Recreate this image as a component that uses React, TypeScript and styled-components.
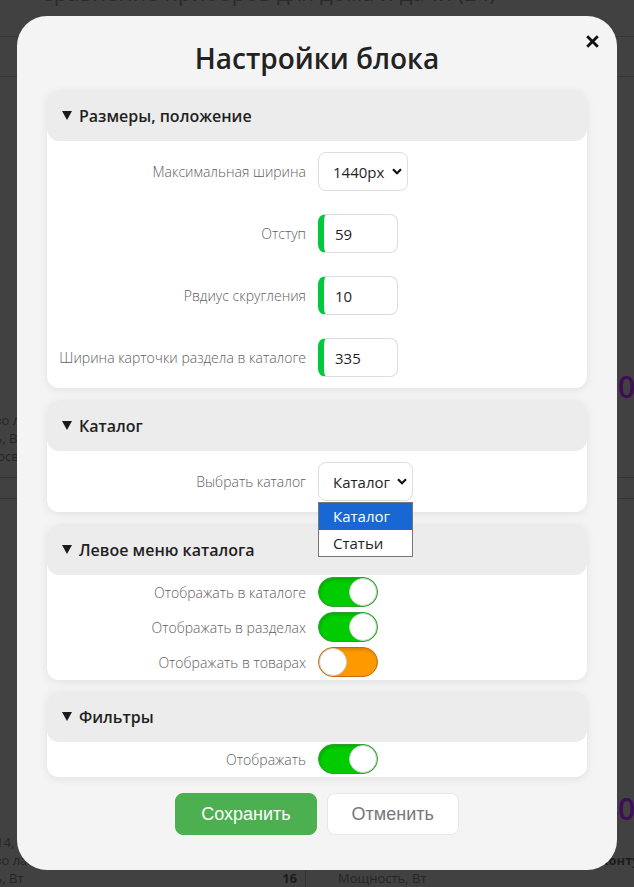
import React from 'react'
import styled, { createGlobalStyle } from 'styled-components'

const GlobalStyle = createGlobalStyle`
  * {
    box-sizing: border-box;
  }
  html,
  body {
    margin: 0;
    padding: 0;
  }
  body {
    font-family: 'Open Sans', 'Noto Sans', sans-serif;
    background: #414141;
  }
`

const Screen = styled.div`
  position: relative;
  width: 634px;
  height: 887px;
  overflow: hidden;
  background: #414141;
`

// dimmed page behind the modal
const BgPage = styled.div`
  color: #262626;
  font-family: 'Open Sans', sans-serif;
`

const BgTopBar = styled.div`
  height: 37px;
  overflow: hidden;
  border-bottom: 1px solid #363636;
  padding-left: 40px;
`

const BgTopText = styled.div`
  margin-top: -19px;
  font-size: 22px;
  line-height: 22px;
  white-space: nowrap;
  color: #2a2a2a;
`

const BgSubBar = styled.div`
  height: 40px;
  border-bottom: 1px solid #363636;
`

const BgGrid = styled.div`
  display: grid;
  grid-template-columns: 370px 380px;
  margin-left: -65px;
`

const BgColumn = styled.div<{ $right?: boolean }>`
  border-left: ${(p) => (p.$right ? '1px solid #333' : 'none')};
  padding: ${(p) => (p.$right ? '0 8px 0 32px' : '0 8px 0 0')};
`

const BgCard = styled.div`
  height: 422px;
  display: flex;
  flex-direction: column;
`

const BgImage = styled.div`
  height: 290px;
`

const BgPrice = styled.div`
  height: 40px;
  line-height: 40px;
  font-size: 30px;
  font-weight: 600;
  color: #3e0d55;
  text-align: right;
`

const BgSpecs = styled.div`
  margin-top: 4px;
  height: 66px;
`

const BgSpec = styled.div`
  display: flex;
  justify-content: space-between;
  height: 18px;
  line-height: 18px;
  font-size: 13px;
`

const BgValue = styled.b`
  color: #1c1c1c;
`

const BgTableRow = styled.div`
  height: 22px;
  border-top: 1px solid #333;
  border-bottom: 1px solid #333;
`

// modal
const ModalLayer = styled.div`
  position: absolute;
  inset: 0;
  display: flex;
  justify-content: center;
  align-items: flex-start;
  padding-top: 16px;
`

const Modal = styled.div`
  position: relative;
  width: 600px;
  height: 854px;
  background: #f4f4f4;
  border-radius: 30px;
  padding: 23px 30px 0;
  display: flex;
  flex-direction: column;
`

const CloseBtn = styled.button`
  position: absolute;
  top: 19px;
  right: 18px;
  width: 13px;
  height: 13px;
  padding: 0;
  border: none;
  background: none;
  cursor: pointer;
  display: flex;
`

const Title = styled.h2`
  margin: 0 0 13px;
  font-size: 28px;
  line-height: 38px;
  font-weight: 600;
  color: #222;
  text-align: center;
`

const Sections = styled.div`
  display: flex;
  flex-direction: column;
`

const Section = styled.section<{ $gap?: number }>`
  background: #fff;
  border-radius: 12px;
  box-shadow: 0 2px 8px rgba(0, 0, 0, 0.08);
  margin-bottom: ${(p) => (p.$gap !== undefined ? p.$gap : 12)}px;
`

const SectionHead = styled.div`
  height: 51px;
  background: #ececec;
  border-radius: 12px;
  display: flex;
  align-items: center;
  gap: 7px;
  padding-left: 15px;
  font-size: 16px;
  font-weight: 600;
  color: #1f1f1f;
`

const Caret = styled.span`
  width: 0;
  height: 0;
  border-left: 5.5px solid transparent;
  border-right: 5.5px solid transparent;
  border-top: 9px solid #1a1a1a;
`

const SectionBody = styled.div<{ $compact?: boolean }>`
  display: flex;
  flex-direction: column;
  gap: ${(p) => (p.$compact ? '5px' : '23px')};
  padding: ${(p) => (p.$compact ? '2px 0 3px' : '11px 0')};
`

const Row = styled.div`
  display: grid;
  grid-template-columns: 259px auto;
  column-gap: 12px;
  align-items: center;
`

const Label = styled.span`
  text-align: right;
  font-size: 14px;
  font-weight: 300;
  color: #606060;
  white-space: nowrap;
`

const Control = styled.div`
  display: flex;
`

const SelectWrap = styled.div`
  position: relative;
`

const SelectBox = styled.div<{ $w: number }>`
  width: ${(p) => p.$w}px;
  height: 39px;
  border: 1px solid #ddd;
  border-radius: 8px;
  background: #fff;
  display: flex;
  align-items: center;
  justify-content: space-between;
  padding: 0 5px 0 14px;
  font-size: 15px;
  color: #1f1f1f;
`

const Options = styled.ul`
  position: absolute;
  top: calc(100% + 1px);
  left: 0;
  right: 0;
  margin: 0;
  padding: 0;
  list-style: none;
  background: #fff;
  border: 1px solid #767676;
  z-index: 2;
`

const Option = styled.li<{ $active?: boolean }>`
  height: 26.5px;
  line-height: 26.5px;
  padding-left: 14px;
  font-size: 15px;
  background: ${(p) => (p.$active ? '#1967d2' : '#fff')};
  color: ${(p) => (p.$active ? '#fff' : '#1f1f1f')};
`

const NumberInput = styled.input`
  width: 80px;
  height: 39px;
  border: 1px solid #ddd;
  border-left: 6px solid #00c93c;
  border-radius: 8px;
  padding: 0 0 0 11px;
  font: 15px 'Open Sans', sans-serif;
  color: #1f1f1f;
  background: #fff;
  outline: none;
`

const Switch = styled.button<{ $on: boolean }>`
  width: 60px;
  height: 30px;
  padding: 0;
  border-radius: 15px;
  background: ${(p) => (p.$on ? '#00cc00' : '#ff9900')};
  border: 1px solid ${(p) => (p.$on ? '#2f9f2f' : '#c8680a')};
  display: flex;
  justify-content: ${(p) => (p.$on ? 'flex-end' : 'flex-start')};
  align-items: center;
  box-shadow: inset 1px 2px 3px rgba(0, 0, 0, 0.15);
  cursor: pointer;
`

const Knob = styled.span`
  width: 28px;
  height: 28px;
  border-radius: 50%;
  background: #fff;
  border: 1px solid #d0d0d0;
`

const Actions = styled.div`
  display: flex;
  justify-content: center;
  gap: 10px;
  margin-top: 16px;
`

const Btn = styled.button<{ $primary?: boolean }>`
  height: 42px;
  padding: ${(p) => (p.$primary ? '0 25px' : '0 24px')};
  border-radius: 8px;
  font: 18px 'Liberation Sans', Arial, sans-serif;
  border: 1px solid ${(p) => (p.$primary ? '#4caf50' : '#e8e8e8')};
  background: ${(p) => (p.$primary ? '#4caf50' : '#fff')};
  color: ${(p) => (p.$primary ? '#fff' : '#777')};
  cursor: pointer;
`

const Chevron = () => (
  <svg width="10" height="7" viewBox="0 0 10 7">
    <path d="M1 1.3 L5 5.3 L9 1.3" fill="none" stroke="#111" strokeWidth="2.2" />
  </svg>
)

const cards = [
  {
    price: '12 900 ₽',
    specs: [
      ['Количество ламп, шт', '8'],
      ['Мощность, Вт', '60'],
      ['Площадь освещения, м²', '16']
    ]
  },
  {
    price: '15 400 ₽',
    specs: [
      ['Цоколь: Е14, LED,', 'E14'],
      ['Количество ламп, шт', 'Контурный'],
      ['Мощность, Вт', '16']
    ]
  }
]

const BgProducts = ({ right }: { right?: boolean }) => (
  <BgColumn $right={right}>
    {cards.map((c, i) => (
      <BgCard key={i}>
        <BgImage />
        <BgPrice>{c.price}</BgPrice>
        <BgSpecs>
          {c.specs.map(([k, v]) => (
            <BgSpec key={k}>
              <span>{k}</span>
              <BgValue>{v}</BgValue>
            </BgSpec>
          ))}
        </BgSpecs>
        <BgTableRow />
      </BgCard>
    ))}
  </BgColumn>
)

const Field = ({ label, children }: { label: string; children: React.ReactNode }) => (
  <Row>
    <Label>{label}</Label>
    <Control>{children}</Control>
  </Row>
)

const Toggle = ({ on }: { on: boolean }) => (
  <Switch type="button" role="switch" aria-checked={on} $on={on}>
    <Knob />
  </Switch>
)

const App = () => {
  return (
    <Screen>
      <GlobalStyle />
      <BgPage>
        <BgTopBar>
          <BgTopText>Сравнение приборов для дома и дачи (24)</BgTopText>
        </BgTopBar>
        <BgSubBar />
        <BgGrid>
          <BgProducts />
          <BgProducts right />
        </BgGrid>
      </BgPage>

      <ModalLayer>
        <Modal>
          <CloseBtn aria-label="Закрыть">
            <svg width="13" height="13" viewBox="0 0 13 13">
              <path d="M1.2 1.2 L11.8 11.8 M11.8 1.2 L1.2 11.8" stroke="#111" strokeWidth="2.8" />
            </svg>
          </CloseBtn>
          <Title>Настройки блока</Title>

          <Sections>
            <Section>
              <SectionHead>
                <Caret />
                Размеры, положение
              </SectionHead>
              <SectionBody>
                <Field label="Максимальная ширина">
                  <SelectBox $w={90}>
                    1440px
                    <Chevron />
                  </SelectBox>
                </Field>
                <Field label="Отступ">
                  <NumberInput defaultValue="59" />
                </Field>
                <Field label="Рвдиус скругления">
                  <NumberInput defaultValue="10" />
                </Field>
                <Field label="Ширина карточки раздела в каталоге">
                  <NumberInput defaultValue="335" />
                </Field>
              </SectionBody>
            </Section>

            <Section>
              <SectionHead>
                <Caret />
                Каталог
              </SectionHead>
              <SectionBody>
                <Field label="Выбрать каталог">
                  <SelectWrap>
                    <SelectBox $w={95}>
                      Каталог
                      <Chevron />
                    </SelectBox>
                    <Options>
                      <Option $active>Каталог</Option>
                      <Option>Статьи</Option>
                    </Options>
                  </SelectWrap>
                </Field>
              </SectionBody>
            </Section>

            <Section $gap={11}>
              <SectionHead>
                <Caret />
                Левое меню каталога
              </SectionHead>
              <SectionBody $compact>
                <Field label="Отображать в каталоге">
                  <Toggle on />
                </Field>
                <Field label="Отображать в разделах">
                  <Toggle on />
                </Field>
                <Field label="Отображать в товарах">
                  <Toggle on={false} />
                </Field>
              </SectionBody>
            </Section>

            <Section $gap={0}>
              <SectionHead>
                <Caret />
                Фильтры
              </SectionHead>
              <SectionBody $compact>
                <Field label="Отображать">
                  <Toggle on />
                </Field>
              </SectionBody>
            </Section>
          </Sections>

          <Actions>
            <Btn $primary>Сохранить</Btn>
            <Btn>Отменить</Btn>
          </Actions>
        </Modal>
      </ModalLayer>
    </Screen>
  )
}

export default App
